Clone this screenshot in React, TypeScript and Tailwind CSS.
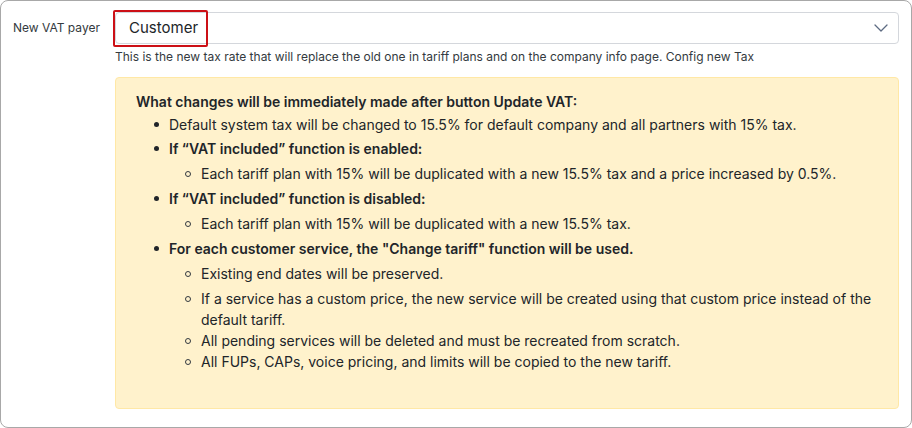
import { ChevronDown } from 'lucide-react';

const font = { fontFamily: 'Inter, "Noto Sans", sans-serif' };

function Sub({ children, className = '' }: { children: React.ReactNode; className?: string }) {
  return (
    <li className={`flex ${className}`}>
      <span className="w-[31px] shrink-0 pt-[8px] pl-[15px]">
        <span className="block w-[6px] h-[6px] rounded-full border border-[#343a40]" />
      </span>
      <span>{children}</span>
    </li>
  );
}

function Bullet({ children, className = '' }: { children: React.ReactNode; className?: string }) {
  return (
    <li className={`flex ${className}`}>
      <span className="w-[14px] shrink-0 pt-[8px] pl-[1px]">
        <span className="block w-[5px] h-[5px] rounded-full bg-[#212529]" />
      </span>
      <span className="ml-[2px]">{children}</span>
    </li>
  );
}

export default function App() {
  return (
    <div className="w-[912px] h-[428px] bg-white overflow-hidden" style={font}>
      <div className="h-[428px] border border-[#a8a8a8] rounded-[8px] flex pt-[11px]">
        <div className="w-[114px] shrink-0 pl-[12px] pt-[7px] text-[12px] text-[#343a40]">New VAT payer</div>
        <div className="flex-1 pr-[12px]">
          <div className="relative h-[32px] border border-[#d4d7dc] rounded-[4px] flex items-center justify-between pl-[13px] pr-[5px]">
            <span className="text-[15px] text-[#212529]">Customer</span>
            <ChevronDown className="w-[24px] h-[24px] text-[#5d6b82]" strokeWidth={1.3} />
            <div className="absolute -left-[3px] -top-[3px] w-[95px] h-[37px] border-2 border-[#cc1016] rounded-[2px]" />
          </div>
          <p className="mt-[4px] text-[12px] leading-[18px] text-[#343a40]">
            This is the new tax rate that will replace the old one in tariff plans and on the company info page. Config new Tax
          </p>
          <div className="mt-[11px] h-[332px] bg-[#fff2cc] border border-[#ffe8a6] rounded-[4px] pl-[20px] pr-[16px] pt-[13px] text-[14px] leading-[21px] text-[#212529]">
            <p className="font-semibold">What changes will be immediately made after button Update VAT:</p>
            <ul className="mt-[2px] pl-[17px]">
              <Bullet className="mb-[3px]">Default system tax will be changed to 15.5% for default company and all partners with 15% tax.</Bullet>
              <Bullet className="mb-[4px]"><b className="font-semibold">If “VAT included” function is enabled:</b></Bullet>
              <li className="mb-[4px]">
                <ul className="pl-[17px]">
                  <Sub>Each tariff plan with 15% will be duplicated with a new 15.5% tax and a price increased by 0.5%.</Sub>
                </ul>
              </li>
              <Bullet className="mb-[4px]"><b className="font-semibold">If “VAT included” function is disabled:</b></Bullet>
              <li className="mb-[4px]">
                <ul className="pl-[17px]">
                  <Sub>Each tariff plan with 15% will be duplicated with a new 15.5% tax.</Sub>
                </ul>
              </li>
              <Bullet className="mb-[4px]"><b className="font-semibold">For each customer service, the "Change tariff" function will be used.</b></Bullet>
              <li>
                <ul className="pl-[17px]">
                  <Sub className="mb-[4px]">Existing end dates will be preserved.</Sub>
                  <Sub>If a service has a custom price, the new service will be created using that custom price instead of the default tariff.</Sub>
                  <Sub>All pending services will be deleted and must be recreated from scratch.</Sub>
                  <Sub>All FUPs, CAPs, voice pricing, and limits will be copied to the new tariff.</Sub>
                </ul>
              </li>
            </ul>
          </div>
        </div>
      </div>
    </div>
  );
}
